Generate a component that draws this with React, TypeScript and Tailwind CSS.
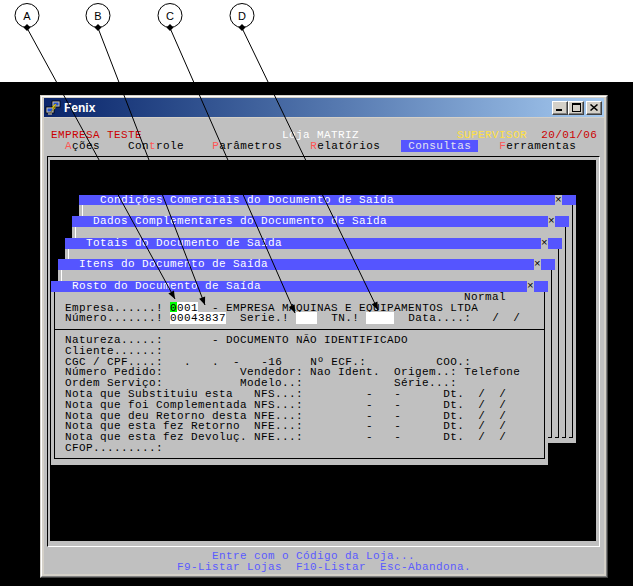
import React from "react";

type Seg = [number, string, string?];

// one text row of the 80-column terminal (7px per column)
function Line({ segs, base = 0, className = "" }: { segs: Seg[]; base?: number; className?: string }) {
  let cur = base;
  const out: React.ReactNode[] = [];
  segs.forEach(([col, text, cls], i) => {
    if (col > cur) out.push(" ".repeat(col - cur));
    out.push(
      <span key={i} className={cls}>
        {text}
      </span>
    );
    cur = col + text.length;
  });
  return <div className={`h-[10.8px] leading-[10.8px] whitespace-pre ${className}`}>{out}</div>;
}

const HOT = "text-[#ff5555]";

const backWindows = [
  { title: "Condições Comerciais do Documento de Saída", cls: "left-[29px] top-[34.6px] h-[248.4px]" },
  { title: "Dados Complementares do Documento de Saída", cls: "left-[22px] top-[56.2px] h-[226.8px]" },
  { title: "Totais do Documento de Saída", cls: "left-[15px] top-[77.8px] h-[205.2px]" },
  { title: "Itens do Documento de Saída", cls: "left-[8px] top-[99.4px] h-[183.6px]" },
];

const notas = [
  "Nota que Substituiu esta",
  "Nota que foi Complementada",
  "Nota que deu Retorno desta",
  "Nota que esta fez Retorno",
  "Nota que esta fez Devoluç.",
];

const callouts = [
  { l: "A", x: 27, tx: 175, ty: 299 },
  { l: "B", x: 98, tx: 205, ty: 305 },
  { l: "C", x: 170, tx: 295, ty: 313 },
  { l: "D", x: 242, tx: 378, ty: 310 },
];

function TitleBar({ title }: { title: string }) {
  return (
    <div className="flex h-[10.8px] leading-[10.8px] bg-[#5555ff] text-white whitespace-pre">
      <div className="flex-1 pl-[21px]">{title}</div>
      <div className="w-[7px] bg-[#c0c0c0] text-black text-center">×</div>
      <div className="w-[14px]" />
    </div>
  );
}

function CaptionButton({ children }: { children: React.ReactNode }) {
  return (
    <div className="w-[16px] h-[14px] bg-[#d4d0c8] border border-t-white border-l-white border-r-[#404040] border-b-[#404040] shadow-[inset_-1px_-1px_#808080] flex items-center justify-center">
      {children}
    </div>
  );
}

export default function App() {
  return (
    <div className="relative w-[633px] h-[586px] bg-white overflow-hidden">
      <div className="h-[82px]" />
      <div className="h-[504px] bg-black pt-[13px] pl-[40px]">
        {/* Fenix window */}
        <div className="w-[568px] h-[483px] border border-t-[#d4d0c8] border-l-[#d4d0c8] border-r-[#404040] border-b-[#404040]">
          <div className="h-full border border-t-white border-l-white border-r-[#808080] border-b-[#808080] bg-[#d4d0c8] px-[2px] pt-[1px] flex flex-col">
            <div className="h-[19px] flex items-center bg-gradient-to-r from-[#0a246a] to-[#a6caf0] pl-[1px] pr-[2px]">
              <svg width="16" height="16" viewBox="0 0 16 16">
                <rect x="7" y="1" width="8" height="6" fill="#c0c0c0" stroke="#000" strokeWidth="0.8" />
                <rect x="8.5" y="2.5" width="5" height="3" fill="#2050d0" />
                <rect x="1" y="7" width="8" height="6" fill="#c0c0c0" stroke="#000" strokeWidth="0.8" />
                <rect x="2.5" y="8.5" width="5" height="3" fill="#2050d0" />
                <rect x="3" y="13" width="4" height="2" fill="#808080" />
                <path d="M10 4 L6.5 8 L9 8 L5.5 12.5 L11 7.5 L8.5 7.5 L11.5 4 Z" fill="#ffee00" stroke="#806000" strokeWidth="0.4" />
              </svg>
              <span className="ml-[3px] font-['Liberation_Sans',sans-serif] font-bold text-[12px] text-white">Fenix</span>
              <div className="flex-1" />
              <div className="flex">
                <CaptionButton>
                  <svg width="8" height="7" viewBox="0 0 8 7">
                    <rect x="0" y="5" width="6" height="2" fill="#000" />
                  </svg>
                </CaptionButton>
                <CaptionButton>
                  <svg width="9" height="9" viewBox="0 0 9 9">
                    <rect x="0.5" y="0.5" width="8" height="8" fill="none" stroke="#000" />
                    <rect x="0" y="1" width="9" height="1" fill="#000" />
                  </svg>
                </CaptionButton>
                <div className="w-[2px]" />
                <CaptionButton>
                  <svg width="8" height="7" viewBox="0 0 8 7">
                    <path d="M0.5 0.5 L7.5 6.5 M7.5 0.5 L0.5 6.5" stroke="#000" strokeWidth="1.5" />
                  </svg>
                </CaptionButton>
              </div>
            </div>
            {/* terminal client area, 80 x 42 */}
            <div className="mt-[1px] w-[560px] h-[456px] bg-[#c0c0c0] pt-[1px] flex flex-col font-['Liberation_Mono',monospace] text-[11px] tracking-[0.4px] text-black">
              <Line segs={[]} />
              <Line
                segs={[
                  [1, "EMPRESA TESTE", "text-[#cc0000]"],
                  [34, "Loja MATRIZ", "text-white"],
                  [59, "SUPERVISOR", "text-[#ffe040]"],
                  [71, "20/01/06", "text-[#cc0000]"],
                ]}
              />
              <Line
                segs={[
                  [3, "A", HOT],
                  [4, "ções"],
                  [12, "Con"],
                  [15, "t", HOT],
                  [16, "role"],
                  [24, "P", HOT],
                  [25, "arâmetros"],
                  [38, "R", HOT],
                  [39, "elatórios"],
                  [51, " Consultas ", "bg-[#5555ff] text-[#e4e4f0]"],
                  [65, "F", HOT],
                  [66, "erramentas"],
                ]}
              />
              <div className="ml-[3px] mt-[4.6px] w-[553px] h-[391px] border border-t-black border-l-black border-b-white border-r-white pl-[2px] pt-[3px]">
                <div className="relative w-[546px] h-[381px] bg-black">
                  {backWindows.map((w) => (
                    <div key={w.title} className={`absolute w-[497px] flex flex-col bg-[#c0c0c0] ${w.cls}`}>
                      <TitleBar title={w.title} />
                      <div className="flex-1 mx-[3px] mb-[5px] border-l border-r border-b border-l-white border-r-black border-b-black" />
                    </div>
                  ))}
                  {/* front window */}
                  <div className="absolute left-[1px] top-[121px] w-[497px] h-[183.6px] flex flex-col bg-[#c0c0c0]">
                    <TitleBar title="Rosto do Documento de Saída" />
                    <div className="mx-[3px] border-l border-r border-b border-black pl-[3px] pb-[4.4px]">
                      <Line base={2} segs={[[60, "Normal"]]} />
                      <Line
                        base={2}
                        segs={[
                          [3, "Empresa......!"],
                          [18, "0", "bg-[#00ff00]"],
                          [19, "001", "bg-white"],
                          [24, "- EMPRESA MAQUINAS E EQUIPAMENTOS LTDA"],
                        ]}
                      />
                      <Line
                        base={2}
                        segs={[
                          [3, "Número.......!"],
                          [18, "00043837", "bg-white"],
                          [28, "Serie.!"],
                          [36, "   ", "bg-white"],
                          [41, "TN.!"],
                          [46, "    ", "bg-white"],
                          [52, "Data....:"],
                          [64, "/"],
                          [67, "/"],
                        ]}
                      />
                      <div className="h-[10.8px] -ml-[3px] flex items-center">
                        <div className="w-full border-t border-black" />
                      </div>
                      <Line base={2} segs={[[3, "Natureza.....:"], [24, "- DOCUMENTO NÃO IDENTIFICADO"]]} />
                      <Line base={2} segs={[[3, "Cliente......:"]]} />
                      <Line
                        base={2}
                        segs={[
                          [3, "CGC / CPF....:"],
                          [20, "."],
                          [24, "."],
                          [27, "-"],
                          [31, "-16"],
                          [38, "Nº ECF.:"],
                          [56, "COO.:"],
                        ]}
                      />
                      <Line
                        base={2}
                        segs={[
                          [3, "Número Pedido:"],
                          [28, "Vendedor:"],
                          [38, "Nao Ident."],
                          [50, "Origem..:"],
                          [60, "Telefone"],
                        ]}
                      />
                      <Line base={2} segs={[[3, "Ordem Serviço:"], [28, "Modelo..:"], [50, "Série...:"]]} />
                      {notas.map((n, i) => (
                        <Line
                          key={n}
                          base={2}
                          segs={[
                            [3, n],
                            [30, i < 2 ? "NFS...:" : "NFE...:"],
                            [46, "-"],
                            [50, "-"],
                            [57, "Dt."],
                            [62, "/"],
                            [65, "/"],
                          ]}
                        />
                      ))}
                      <Line base={2} segs={[[3, "CFOP.........:"]]} />
                    </div>
                  </div>
                </div>
              </div>
              <div className="mt-[4px] text-[#5a5aff]">
                <Line segs={[[24, "Entre com o Código da Loja..."]]} />
                <Line segs={[[19, "F9-Listar Lojas  F10-Listar  Esc-Abandona."]]} />
              </div>
            </div>
          </div>
        </div>
      </div>

      {/* callout annotations */}
      <svg className="absolute inset-0 pointer-events-none" width="633" height="586">
        <defs>
          <marker id="ah" viewBox="0 0 10 10" refX="10" refY="5" markerWidth="9" markerHeight="8" orient="auto">
            <path d="M0,1 L10,5 L0,9 z" fill="#000" />
          </marker>
        </defs>
        {callouts.map((c) => (
          <g key={c.l}>
            <line x1={c.x} y1={28} x2={c.tx} y2={c.ty} stroke="#000" strokeWidth="1" markerEnd="url(#ah)" />
            <circle cx={c.x} cy={15.5} r={12} fill="#fff" stroke="#000" strokeWidth="1" />
            <text x={c.x} y={19.5} textAnchor="middle" fontSize="11" fontFamily="Liberation Sans, sans-serif" fill="#000">
              {c.l}
            </text>
            <rect x={c.x - 2.5} y={25} width="5" height="5" fill="#000" transform={`rotate(45 ${c.x} ${27.5})`} />
          </g>
        ))}
      </svg>
    </div>
  );
}
